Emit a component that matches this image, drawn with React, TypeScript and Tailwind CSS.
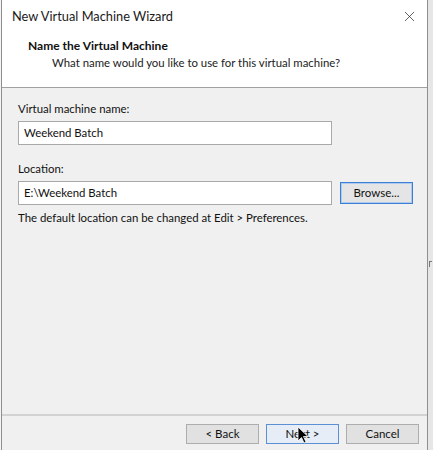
import { X } from "lucide-react";

const font = { fontFamily: '"Segoe UI", Lato, "Noto Sans", Arial, sans-serif' };

const Btn = ({ label, focus = false }: { label: string; focus?: boolean }) => (
  <button
    className={`h-[20px] w-[73px] text-[11.5px] text-[#111] leading-none ${
      focus ? "border border-[#5b8fd6] bg-[#e7edf6]" : "border border-[#adadad] bg-[#e1e1e1]"
    }`}
  >
    {label}
  </button>
);

const App = () => {
  return (
    <div className="w-[433px] h-[450px] flex bg-[#f4f4f4] overflow-hidden" style={font}>
      <div className="w-[1px] h-full bg-[#f4f4f4]" />
      {/* window */}
      <div className="relative w-[427px] h-full flex flex-col border-l border-r border-[#8f8f8f] bg-[#f0f0f0]">
        <div className="bg-white h-[88px] border-b border-[#a0a0a0] flex flex-col">
          <div className="h-[33px] flex items-center justify-between pl-[10px] pr-[9px]">
            <span className="text-[12.8px] text-[#1a1a1a]">New Virtual Machine Wizard</span>
            <X size={17} strokeWidth={1} className="text-[#222]" />
          </div>
          <div className="pl-[26px] pt-[4px] text-[11.4px] leading-[17px]">
            <div className="font-bold text-[12px] text-[#111]">Name the Virtual Machine</div>
            <div className="pl-[24px] text-[#222]">What name would you like to use for this virtual machine?</div>
          </div>
        </div>

        <div className="flex-1 flex flex-col pl-[16px] pt-[12px] text-[11.4px] text-[#111]">
          <div className="leading-[17px]">Virtual machine name:</div>
          <div className="mt-[4px] w-[314px] h-[24px] bg-white border border-[#a9a9a9] flex items-center pl-[5px]">
            Weekend Batch
          </div>
          <div className="mt-[15px] leading-[17px]">Location:</div>
          <div className="mt-[4px] flex items-center gap-[8px]">
            <div className="w-[314px] h-[24px] bg-white border border-[#a9a9a9] flex items-center pl-[5px]">
              E:\Weekend Batch
            </div>
            <button className="w-[73px] h-[22px] border border-[#3c7fd4] bg-[#e5e5e5] text-[11.5px] text-[#111] shadow-[inset_0_0_0_1px_#aecbee]">
              Browse...
            </button>
          </div>
          <div className="mt-[4px] leading-[17px]">The default location can be changed at Edit &gt; Preferences.</div>
        </div>

        <div className="h-[36px] border-t-2 border-[#d2d2d2] flex items-start justify-end pt-[8px] pr-[8px] gap-[7px]">
          <Btn label="< Back" />
          <Btn label="Next >" focus />
          <Btn label="Cancel" />
        </div>

        {/* mouse cursor */}
        <svg className="absolute left-[295px] top-[426px]" width="12" height="18" viewBox="0 0 12 18">
          <path d="M1 1 L1 15 L4.5 11.5 L7 17 L9 16 L6.5 10.5 L11 10.5 Z" fill="#000" stroke="#fff" strokeWidth="0.8" />
        </svg>
      </div>
      <div className="relative flex-1 h-full bg-[#e6e6e6]">
        <div className="absolute left-[1px] top-[261px] w-[3px] h-[6px] border-t border-l border-[#777]" />
      </div>
    </div>
  );
};

export default App;
